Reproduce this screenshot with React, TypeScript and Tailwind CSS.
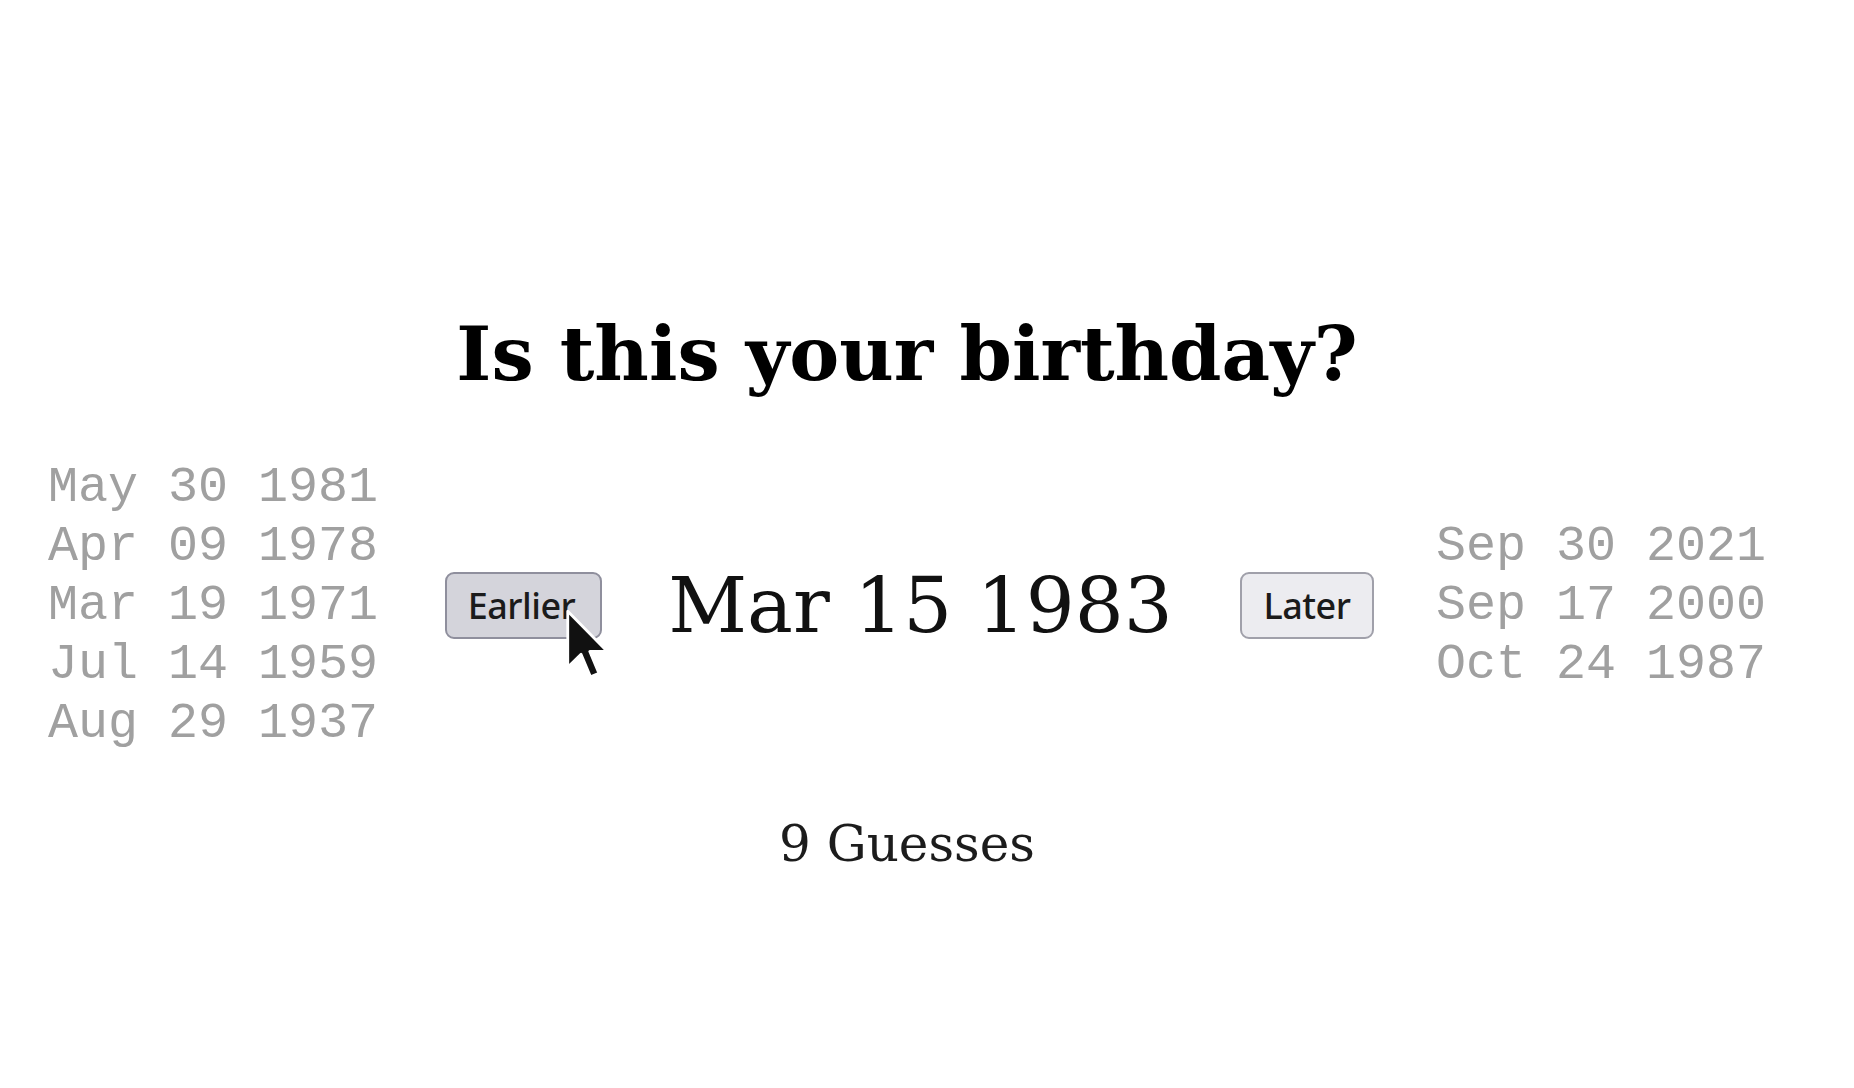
import React from 'react'

const earlier = ['May 30 1981', 'Apr 09 1978', 'Mar 19 1971', 'Jul 14 1959', 'Aug 29 1937']
const later = ['Sep 30 2021', 'Sep 17 2000', 'Oct 24 1987']

function DateList({ items }: { items: string[] }) {
    return (
        <div className="flex flex-col w-[330px] font-['Liberation_Mono',monospace] text-[50px] leading-[59px] text-[#a0a0a0] whitespace-pre">
            {items.map((d) => <div key={d}>{d}</div>)}
        </div>
    )
}

function Cursor() {
    return (
        <svg className="absolute left-[121px] top-[37px] pointer-events-none" width="42" height="71" viewBox="0 0 12 20">
            <path d="M0.5 0.5 L0.5 16.5 L4.3 12.8 L7 19.2 L9.4 18.2 L6.8 12 L11.8 12 Z" fill="#111" stroke="#fff" strokeWidth="0.8" strokeLinejoin="round" />
        </svg>
    )
}

export default function App() {
    return (
        <div className="w-[1854px] h-[1088px] bg-white pr-[40px] flex flex-col items-center font-['DejaVu_Serif',serif]">
            <h1 className="mt-[309px] text-[75px] leading-[90px] font-bold text-black">Is this your birthday?</h1>

            <div className="mt-[59px] flex items-center">
                <DateList items={earlier} />
                <div className="relative ml-[67px]">
                    <button className="w-[157px] h-[67px] rounded-[9px] border-2 border-[#8f8f9d] bg-[#d4d4db] font-['Noto_Sans',sans-serif] font-medium text-[36px] text-[#1b1b1b] tracking-[-0.5px] pr-[4px]">Earlier</button>
                    <Cursor />
                </div>
                <div className="ml-[66px] w-[505px] text-center text-[77px] leading-[90px] text-[#111]">Mar 15 1983</div>
                <button className="ml-[67px] w-[134px] h-[67px] rounded-[9px] border-2 border-[#a0a0aa] bg-[#ececf0] font-['Noto_Sans',sans-serif] font-medium text-[36px] text-[#1b1b1b] tracking-[-0.5px]">Later</button>
                <div className="ml-[62px]">
                    <DateList items={later} />
                </div>
            </div>

            <div className="mt-[61px] text-[50px] leading-[60px] text-[#1c1c1c]">9 Guesses</div>
        </div>
    )
}
